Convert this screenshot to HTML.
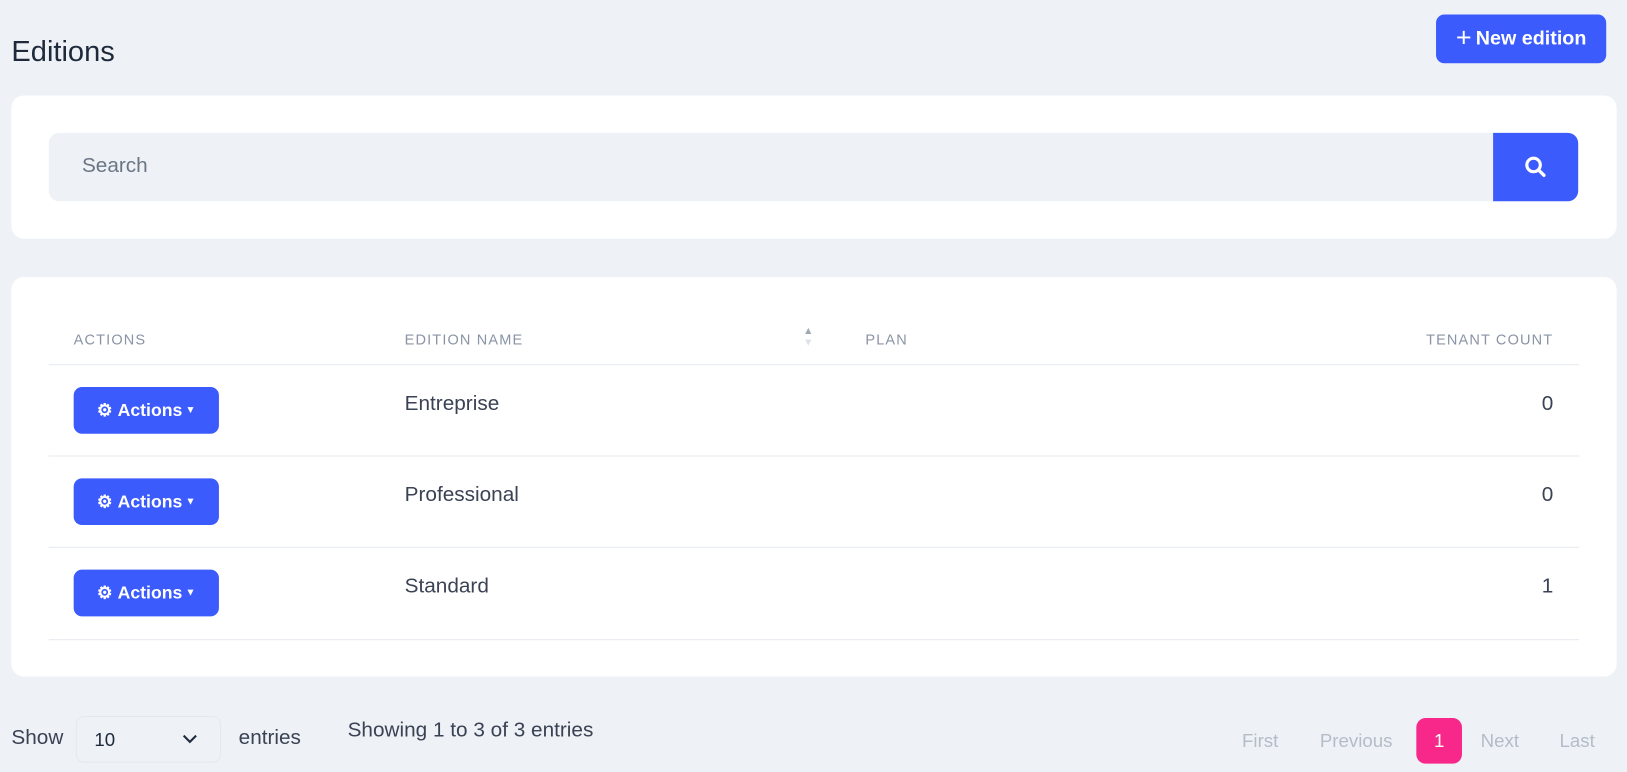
<!DOCTYPE html><html><head><style>
body{margin:0;width:1627px;height:772px;background:#eef2f6;font-family:"Liberation Sans",sans-serif;overflow:hidden;color:#2f3a4b}
#w{position:absolute;left:0;top:0;width:1568px;height:744px;transform:scale(1.0376);transform-origin:0 0}
.a{position:absolute}
.card{background:#fff;border-radius:12px}
.btn{background:#3b5bfd;color:#fff;border-radius:8px;font-weight:bold;display:flex;align-items:center;justify-content:center}
.th{font-size:14px;letter-spacing:1.1px;color:#8a94a6}
.line{height:1px;background:#e6eaf0;left:47px;width:1475px}
.td{font-size:20px;color:#3a4254}
.r{right:71px;text-align:right}
.pg{font-size:18px;color:#b4bcc8}
</style></head><body><div id="w">
<div class="a" style="left:11px;top:34px;font-size:28px;color:#1e293b">Editions</div>
<div class="a btn" style="left:1384px;top:14px;width:164px;height:47px;font-size:19px"><span style="font-size:26px;font-weight:normal;margin-right:4px;margin-top:-3px">+</span>New edition</div>
<div class="a card" style="left:11px;top:92px;width:1547px;height:138px"></div>
<div class="a" style="left:47px;top:128px;width:1392px;height:66px;background:#eef2f6;border-radius:10px 0 0 10px"></div>
<div class="a" style="left:79px;top:149px;font-size:20px;color:#6b7585">Search</div>
<div class="a btn" style="left:1439px;top:128px;width:82px;height:66px;border-radius:0 10px 10px 0">
<svg width="24" height="24" viewBox="0 0 24 24"><circle cx="10" cy="10" r="6.5" fill="none" stroke="#fff" stroke-width="3"/><path d="M15 15l5 5" stroke="#fff" stroke-width="3.2" stroke-linecap="round"/></svg></div>
<div class="a card" style="left:11px;top:267px;width:1547px;height:385px"></div>
<div class="a th" style="left:71px;top:319px">ACTIONS</div>
<div class="a th" style="left:390px;top:319px">EDITION NAME</div>
<div class="a" style="left:774px;top:314px;font-size:10px;color:#a0a8b4;line-height:11px">▲<br><span style="color:#dde2e8">▼</span></div>
<div class="a th" style="left:834px;top:319px">PLAN</div>
<div class="a th r" style="top:319px">TENANT COUNT</div>
<div class="a line" style="top:351px"></div>
<div class="a line" style="top:439px"></div>
<div class="a line" style="top:527px"></div>
<div class="a line" style="top:616px"></div>
<div class="a btn" style="left:71px;top:373px;width:140px;height:45px;font-size:17px">⚙&nbsp;Actions<span style="font-size:10px;margin-left:3px">▼</span></div>
<div class="a td" style="left:390px;top:378px">Entreprise</div>
<div class="a td r" style="top:378px">0</div>
<div class="a btn" style="left:71px;top:461px;width:140px;height:45px;font-size:17px">⚙&nbsp;Actions<span style="font-size:10px;margin-left:3px">▼</span></div>
<div class="a td" style="left:390px;top:466px">Professional</div>
<div class="a td r" style="top:466px">0</div>
<div class="a btn" style="left:71px;top:549px;width:140px;height:45px;font-size:17px">⚙&nbsp;Actions<span style="font-size:10px;margin-left:3px">▼</span></div>
<div class="a td" style="left:390px;top:554px">Standard</div>
<div class="a td r" style="top:554px">1</div>
<div class="a td" style="left:11px;top:700px">Show</div>
<div class="a" style="left:73px;top:690px;width:140px;height:45px;border:1px solid #e4e8ee;border-radius:8px;box-sizing:border-box"></div>
<div class="a" style="left:91px;top:703px;font-size:18px;color:#1e293b">10</div>
<svg class="a" style="left:175px;top:706px" width="16" height="12"><path d="M2 3l6 6 6-6" fill="none" stroke="#1e293b" stroke-width="2"/></svg>
<div class="a td" style="left:230px;top:700px">entries</div>
<div class="a td" style="left:335px;top:693px">Showing 1 to 3 of 3 entries</div>
<div class="a pg" style="left:1197px;top:704px">First</div>
<div class="a pg" style="left:1272px;top:704px">Previous</div>
<div class="a" style="left:1365px;top:692px;width:44px;height:44px;background:#f7288a;border-radius:9px;color:#fff;font-size:18px;display:flex;align-items:center;justify-content:center">1</div>
<div class="a pg" style="left:1427px;top:704px">Next</div>
<div class="a pg" style="left:1503px;top:704px">Last</div>
</div></body></html>
